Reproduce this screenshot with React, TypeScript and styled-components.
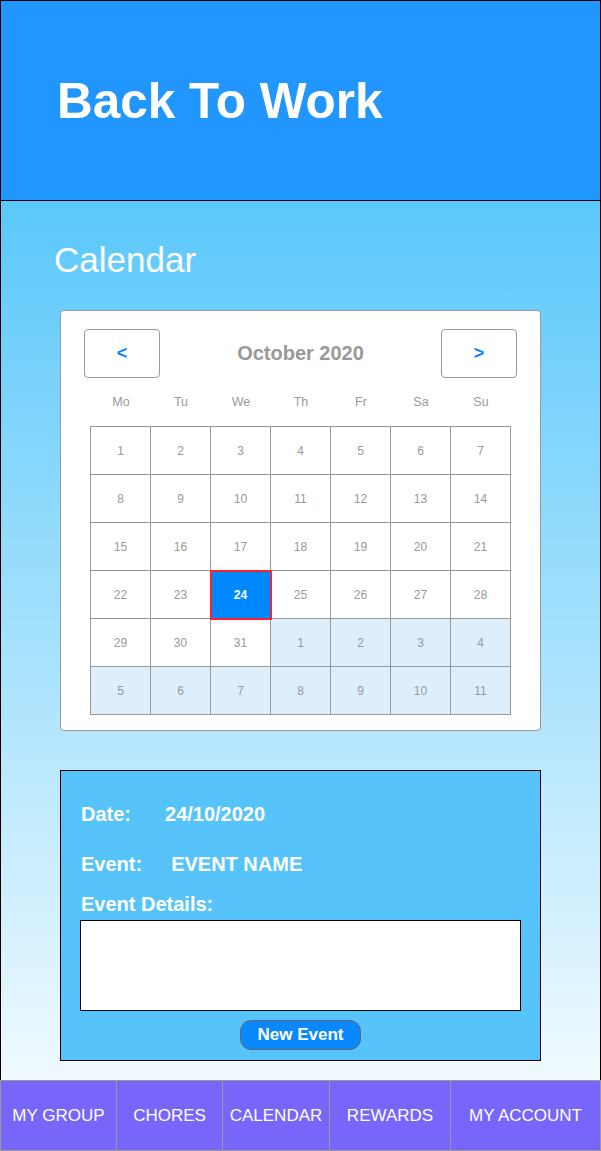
import React from 'react';
import styled, {createGlobalStyle} from 'styled-components';

const GlobalStyle = createGlobalStyle`
  html, body {
    margin: 0;
    padding: 0;
    background: #ffffff;
  }
  body {
    font-family: "Liberation Sans", Arial, sans-serif;
  }
  * {
    box-sizing: border-box;
  }
`;

const Page = styled.div`
  width: 601px;
  min-height: 1151px;
  display: flex;
  flex-direction: column;
`;

const Header = styled.header`
  height: 201px;
  background: #2196fe;
  border: 1px solid #000;
  display: flex;
  align-items: center;
  padding-left: 56px;
`;

const Title = styled.h1`
  margin: 0;
  color: #fff;
  font-size: 49.5px;
  font-weight: bold;
  line-height: 56px;
`;

const Main = styled.main`
  height: 879px;
  border-left: 1px solid #000;
  border-right: 1px solid #000;
  background: linear-gradient(180deg, #5ac8fb 0%, #f0faff 100%);
  padding: 39px 0 0 0;
`;

const Heading = styled.h2`
  margin: 0;
  padding-left: 53px;
  color: #fff;
  font-size: 35px;
  font-weight: normal;
  line-height: 39px;
`;

const Card = styled.section`
  width: 481px;
  margin: 31px 0 0 59px;
  background: #fff;
  border: 1px solid #999;
  border-radius: 4px;
  padding: 18px 0 15px;
`;

const MonthBar = styled.div`
  display: flex;
  align-items: center;
  justify-content: space-between;
  padding: 0 23px;
`;

const NavButton = styled.button`
  width: 76px;
  height: 49px;
  border: 1px solid #999;
  border-radius: 4px;
  background: #fff;
  color: #0a84ff;
  font-family: "Liberation Sans", Arial, sans-serif;
  font-size: 18px;
  font-weight: bold;
  padding: 0;
`;

const MonthTitle = styled.div`
  color: #999;
  font-size: 20px;
  font-weight: bold;
`;

const DayGrid = styled.div`
  display: grid;
  grid-template-columns: repeat(7, 60px);
  margin: 0 29px;
`;

const WeekRow = styled(DayGrid)`
  height: 48px;
  padding-left: 1px;
  align-items: center;
`;

const WeekDay = styled.div`
  text-align: center;
  color: #999;
  font-size: 12.5px;
`;

const Cells = styled(DayGrid)`
  width: 421px;
  border-top: 1px solid #999;
  border-left: 1px solid #999;
`;

const Cell = styled.div<{ $outside?: boolean; $today?: boolean }>`
  height: 48px;
  display: flex;
  align-items: center;
  justify-content: center;
  border-right: 1px solid #999;
  border-bottom: 1px solid #999;
  font-size: 12px;
  color: ${p => (p.$today ? '#fff' : '#999')};
  font-weight: ${p => (p.$today ? 'bold' : 'normal')};
  background: ${p => (p.$today ? '#0088ff' : p.$outside ? '#ddeefd' : '#fff')};
  ${p => p.$today && `
    position: relative;
    z-index: 1;
    outline: 2px solid #ff1f2f;
    outline-offset: -1px;
  `}
`;

const EventPanel = styled.section`
  width: 481px;
  margin: 39px 0 0 59px;
  background: #56c4fa;
  border: 1px solid #000;
  padding: 32px 0 10px;
  display: flex;
  flex-direction: column;
`;

const InfoRow = styled.div<{ $top: number }>`
  display: flex;
  padding-left: 20px;
  margin-top: ${p => p.$top}px;
  color: #fff;
  font-size: 20px;
  font-weight: bold;
  line-height: 22px;
`;

const InfoValue = styled.span<{ $gap: number }>`
  margin-left: ${p => p.$gap}px;
`;

const Details = styled.textarea`
  display: block;
  width: 441px;
  height: 91px;
  margin: 5px 0 0 19px;
  border: 1px solid #000;
  background: #fff;
  resize: none;
  outline: none;
`;

const NewEventButton = styled.button`
  align-self: center;
  width: 121px;
  height: 30px;
  margin-top: 9px;
  padding: 0;
  border: 1px solid #666;
  border-radius: 11px;
  background: #0a88ff;
  color: #fff;
  font-family: "Liberation Sans", Arial, sans-serif;
  font-size: 17px;
  font-weight: bold;
`;

const BottomNav = styled.nav`
  height: 71px;
  display: grid;
  grid-template-columns: 115px 106px 107px 121px 1fr;
  background: #7866fa;
  border: 1px solid #999;
`;

const NavItem = styled.div<{ $first?: boolean }>`
  display: flex;
  align-items: center;
  justify-content: center;
  border-left: ${p => (p.$first ? 'none' : '1px solid #999')};
  color: #fff;
  font-size: 17px;
  white-space: nowrap;
`;

const weekDays = ['Mo', 'Tu', 'We', 'Th', 'Fr', 'Sa', 'Su'];
const navItems = ['MY GROUP', 'CHORES', 'CALENDAR', 'REWARDS', 'MY ACCOUNT'];

export default function App() {
  const days = Array.from({length: 42}, (_, i) => {
    const n = i + 1;
    return n > 31 ? {label: n - 31, outside: true} : {label: n, outside: false};
  });

  return (
    <Page>
      <GlobalStyle/>
      <Header>
        <Title>Back To Work</Title>
      </Header>
      <Main>
        <Heading>Calendar</Heading>
        <Card>
          <MonthBar>
            <NavButton>&lt;</NavButton>
            <MonthTitle>October 2020</MonthTitle>
            <NavButton>&gt;</NavButton>
          </MonthBar>
          <WeekRow>
            {weekDays.map(d => <WeekDay key={d}>{d}</WeekDay>)}
          </WeekRow>
          <Cells>
            {days.map((d, i) => (
              <Cell key={i} $outside={d.outside} $today={!d.outside && d.label === 24}>
                {d.label}
              </Cell>
            ))}
          </Cells>
        </Card>
        <EventPanel>
          <InfoRow $top={0}>
            <span>Date:</span>
            <InfoValue $gap={34}>24/10/2020</InfoValue>
          </InfoRow>
          <InfoRow $top={28}>
            <span>Event:</span>
            <InfoValue $gap={29}>EVENT NAME</InfoValue>
          </InfoRow>
          <InfoRow $top={18}>
            <span>Event Details:</span>
          </InfoRow>
          <Details/>
          <NewEventButton>New Event</NewEventButton>
        </EventPanel>
      </Main>
      <BottomNav>
        {navItems.map((n, i) => (
          <NavItem key={n} $first={i === 0}>{n}</NavItem>
        ))}
      </BottomNav>
    </Page>
  );
}
